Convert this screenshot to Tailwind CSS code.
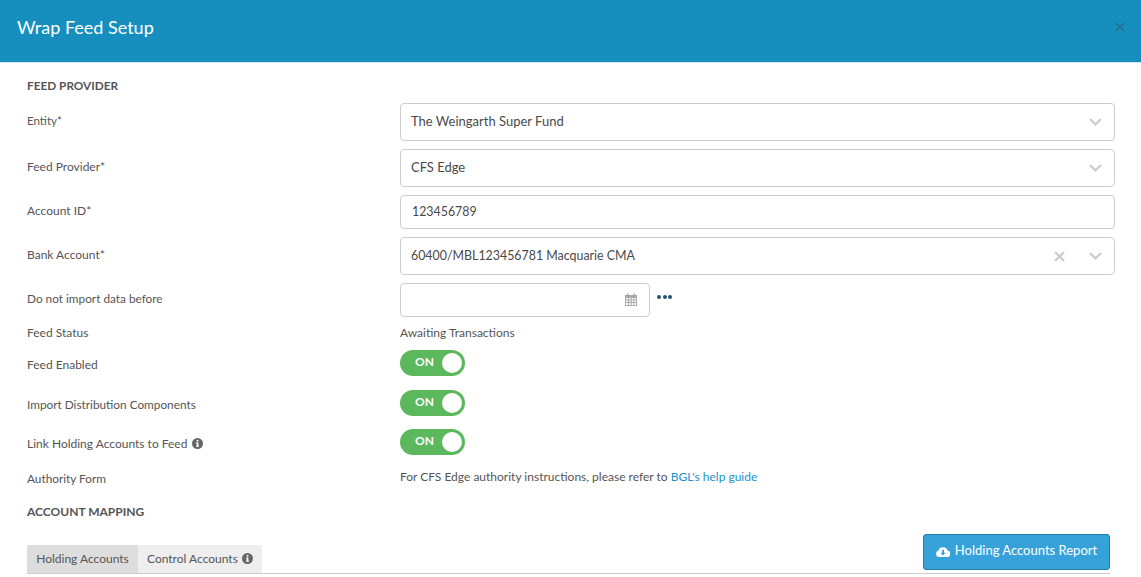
<!DOCTYPE html>
<html lang="en">
<head>
<meta charset="UTF-8">
<title>Wrap Feed Setup</title>
<script src="https://cdn.jsdelivr.net/npm/@tailwindcss/browser@4"></script>
</head>
<body class="bg-white h-[577px] overflow-hidden font-['Lato',sans-serif] text-[#555] text-[12px]">
  <header class="h-[63px] bg-[#178fbe] border-b border-[#d9e6ec] flex items-center justify-between pl-[17px] pr-[16px]">
    <h1 class="text-white text-[18px] leading-none pb-[8px]">Wrap Feed Setup</h1>
    <svg class="mb-[8px]" width="10" height="10" viewBox="0 0 10 10" fill="none" stroke="#2a6f8f" stroke-width="1.6"><path d="M1 1l8 8M9 1l-8 8"/></svg>
  </header>

  <main class="pl-[27px] pr-[26px]">
    <h2 class="font-bold text-[11.8px] text-[#555] h-[40px] pt-[16px] leading-[14px]">FEED PROVIDER</h2>

    <div class="flex h-[38px] mb-[8px]">
      <label class="w-[373px] pt-[10px] leading-[15px] text-[11.5px]">Entity*</label>
      <div class="flex-1 border border-[#ccc] rounded-[4px] flex items-center justify-between pl-[10px] pr-[12px] text-[13px] text-[#4a4a4a]">
        The Weingarth Super Fund
        <svg width="13" height="8" viewBox="0 0 13 8" fill="none" stroke="#ccc" stroke-width="2.2"><path d="M1 1l5.500 5.500L12 1"/></svg>
      </div>
    </div>

    <div class="flex h-[38px] mb-[8px]">
      <label class="w-[373px] pt-[10px] leading-[15px]">Feed Provider*</label>
      <div class="flex-1 border border-[#ccc] rounded-[4px] flex items-center justify-between pl-[10px] pr-[12px] text-[13px] text-[#4a4a4a]">
        CFS Edge
        <svg width="13" height="8" viewBox="0 0 13 8" fill="none" stroke="#ccc" stroke-width="2.2"><path d="M1 1l5.500 5.500L12 1"/></svg>
      </div>
    </div>

    <div class="flex h-[34px] mb-[8px]">
      <label class="w-[373px] pt-[8px] leading-[15px]">Account ID*</label>
      <div class="flex-1 border border-[#ccc] rounded-[4px] flex items-center pl-[11px] text-[12.4px] text-[#4a4a4a]">123456789</div>
    </div>

    <div class="flex h-[38px] mb-[8px]">
      <label class="w-[373px] pt-[10px] leading-[15px]">Bank Account*</label>
      <div class="flex-1 border border-[#ccc] rounded-[4px] flex items-center pl-[10px] pr-[12px] text-[12.4px] text-[#4a4a4a]">
        <span class="flex-1">60400/MBL123456781 Macquarie CMA</span>
        <svg class="mr-[24px]" width="11" height="11" viewBox="0 0 11 11" fill="none" stroke="#ccc" stroke-width="2.200"><path d="M1 1l9 9M10 1l-9 9"/></svg>
        <svg width="13" height="8" viewBox="0 0 13 8" fill="none" stroke="#ccc" stroke-width="2.2"><path d="M1 1l5.500 5.500L12 1"/></svg>
      </div>
    </div>

    <div class="flex h-[34px] mb-[8px]">
      <label class="w-[373px] pt-[8px] leading-[15px] text-[11.8px]">Do not import data before</label>
      <div class="w-[250px] border border-[#ccc] rounded-[4px] flex items-center justify-end pr-[12px] pb-[2px]">
        <svg width="12" height="13" viewBox="0 0 12 13" fill="#aaa"><path d="M0 2h2V.5h1.500V2h5V.5H10V2h2v11H0zM1 5v1.500h2V5zm3 0v1.500h1.700V5zm2.700 0v1.500h1.700V5zm2.600 0v1.500h1.700V5zM1 7.500V9h2V7.500zm3 0V9h1.700V7.500zm2.700 0V9h1.700V7.500zm2.600 0V9h1.700V7.500zM1 10v2h2v-2zm3 0v2h1.700v-2zm2.700 0v2h1.700v-2zm2.600 0v2h1.700v-2z"/></svg>
      </div>
      <div class="flex gap-[1.500px] ml-[7px] mt-[12px] h-[4px]">
        <span class="w-[4px] h-[4px] rounded-full bg-[#1f5673]"></span>
        <span class="w-[4px] h-[4px] rounded-full bg-[#1f5673]"></span>
        <span class="w-[4px] h-[4px] rounded-full bg-[#1f5673]"></span>
      </div>
    </div>

    <div class="flex h-[25px]">
      <label class="w-[373px] leading-[16px]">Feed Status</label>
      <span class="leading-[16px]">Awaiting Transactions</span>
    </div>

    <div class="flex h-[26px] mb-[14px]">
      <label class="w-[373px] pt-[7px] leading-[15px]">Feed Enabled</label>
      <div class="w-[65px] h-[26px] rounded-full bg-[#5cb85c] flex items-center justify-between pl-[15px] pr-[3px]">
        <span class="text-white font-bold text-[12px] pb-[3px]">ON</span>
        <span class="w-[20px] h-[20px] rounded-full bg-white"></span>
      </div>
    </div>

    <div class="flex h-[26px] mb-[13px]">
      <label class="w-[373px] pt-[7px] leading-[15px] text-[11.8px]">Import Distribution Components</label>
      <div class="w-[65px] h-[26px] rounded-full bg-[#5cb85c] flex items-center justify-between pl-[15px] pr-[3px]">
        <span class="text-white font-bold text-[12px] pb-[3px]">ON</span>
        <span class="w-[20px] h-[20px] rounded-full bg-white"></span>
      </div>
    </div>

    <div class="flex h-[26px] mb-[14px]">
      <label class="w-[373px] pt-[7px] leading-[15px] flex items-start gap-[5px]">Link Holding Accounts to Feed
        <svg class="mt-[2px]" width="11" height="11" viewBox="0 0 11 11"><circle cx="5.500" cy="5.500" r="5.500" fill="#666"/><rect x="4.700" y="2" width="1.700" height="1.600" fill="#fff"/><path d="M4 4.500h2.400v3.200H7v1H4v-1h.7V5.500H4z" fill="#fff"/></svg>
      </label>
      <div class="w-[65px] h-[26px] rounded-full bg-[#5cb85c] flex items-center justify-between pl-[15px] pr-[3px]">
        <span class="text-white font-bold text-[12px] pb-[3px]">ON</span>
        <span class="w-[20px] h-[20px] rounded-full bg-white"></span>
      </div>
    </div>

    <div class="flex h-[18px]">
      <label class="w-[373px] pt-[2px] leading-[15px] text-[11.8px]">Authority Form</label>
      <span class="leading-[15px]">For CFS Edge authority instructions, please refer to <a class="text-[#1a93c9]" href="#">BGL's help guide</a></span>
    </div>

    <h2 class="font-bold text-[12px] text-[#555] pt-[17px] leading-[16px] h-[33px]">ACCOUNT MAPPING</h2>

    <div class="h-[54px] border-b border-[#ccc] flex items-end mr-[5px]">
      <div class="flex h-[28px]">
        <div class="bg-[#ddd] w-[111px] flex items-center justify-center pb-[1px]">Holding Accounts</div>
        <div class="bg-[#eee] w-[124px] flex items-center pl-[9px] gap-[4px] pb-[1px]">Control Accounts
          <svg width="11" height="11" viewBox="0 0 11 11"><circle cx="5.500" cy="5.500" r="5.500" fill="#666"/><rect x="4.700" y="2" width="1.700" height="1.600" fill="#fff"/><path d="M4 4.500h2.400v3.200H7v1H4v-1h.7V5.500H4z" fill="#fff"/></svg>
        </div>
      </div>
      <button class="ml-auto mb-[3px] w-[187px] h-[36px] bg-[#37a2d9] border border-[#2a7aa8] rounded-[3px] text-white text-[13px] flex items-center justify-center gap-[5px] pb-[2px]">
        <svg width="14" height="11" viewBox="0 0 14 11" fill="#fff"><path d="M3.500 11A3.300 3.300 0 0 1 2.600 4.500 3 3 0 0 1 6 1.500 4 4 0 0 1 11.400 4.400 3.300 3.300 0 0 1 10.800 11zM6 4v2.800H4.300L7 9.400l2.700-2.600H8V4z"/></svg>
        Holding Accounts Report
      </button>
    </div>
  </main>
</body>
</html>
